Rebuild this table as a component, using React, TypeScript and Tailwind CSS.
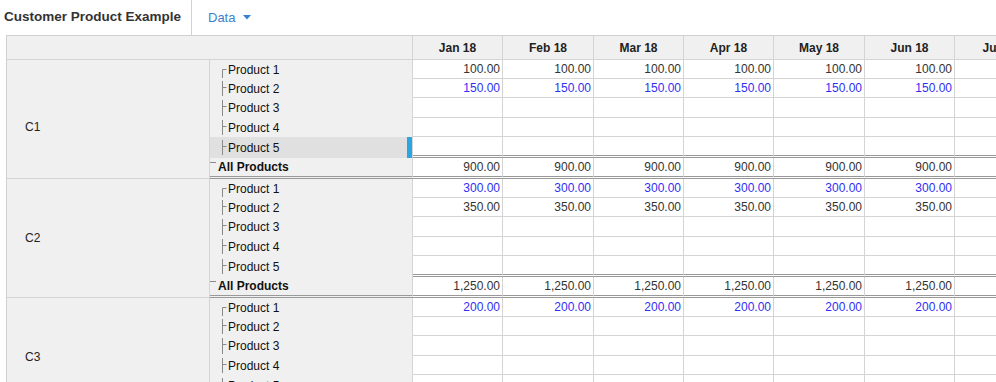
import React from 'react';

type Kind = 'first' | 'mid' | 'total';

type Row = {
  name: string;
  kind: Kind;
  value?: string;
  blue?: boolean;
  selected?: boolean;
};

type Group = { id: string; rows: Row[]; labelPad?: string };

const months = ['Jan 18', 'Feb 18', 'Mar 18', 'Apr 18', 'May 18', 'Jun 18', 'Jul 18'];
const colW = ['w-[90px]', 'w-[91px]', 'w-[90px]', 'w-[90px]', 'w-[91px]', 'w-[90px]', 'w-[90px]'];
const rowH = ['h-[19px]', 'h-[19px]', 'h-[20px]', 'h-[19px]', 'h-[21px]', 'h-[21px]'];
const rowPx = [19, 19, 20, 19, 19, 18];

const groups: Group[] = [
  {
    id: 'C1',
    labelPad: 'pt-[15px]',
    rows: [
      { name: 'Product 1', kind: 'first', value: '100.00' },
      { name: 'Product 2', kind: 'mid', value: '150.00', blue: true },
      { name: 'Product 3', kind: 'mid' },
      { name: 'Product 4', kind: 'mid' },
      { name: 'Product 5', kind: 'mid', selected: true },
      { name: 'All Products', kind: 'total', value: '900.00' },
    ],
  },
  {
    id: 'C2',
    rows: [
      { name: 'Product 1', kind: 'first', value: '300.00', blue: true },
      { name: 'Product 2', kind: 'mid', value: '350.00' },
      { name: 'Product 3', kind: 'mid' },
      { name: 'Product 4', kind: 'mid' },
      { name: 'Product 5', kind: 'mid' },
      { name: 'All Products', kind: 'total', value: '1,250.00' },
    ],
  },
  {
    id: 'C3',
    rows: [
      { name: 'Product 1', kind: 'first', value: '200.00', blue: true },
      { name: 'Product 2', kind: 'mid' },
      { name: 'Product 3', kind: 'mid' },
      { name: 'Product 4', kind: 'mid' },
      { name: 'Product 5', kind: 'mid' },
      { name: 'All Products', kind: 'total', value: '600.00' },
    ],
  },
];

function Tree({ kind, h }: { kind: Kind; h: number }) {
  if (kind === 'total') {
    return (
      <svg width="8" height={h} className="shrink-0" aria-hidden>
        <path d="M0 4.5 H6" stroke="#8a8a8a" fill="none" />
      </svg>
    );
  }
  const d =
    kind === 'first'
      ? `M1.5 ${h - 1} V9.5 H5.5`
      : `M1.5 2 V${h - 2} M1.5 ${Math.round(h / 2) - 1.5} H5.5`;
  return (
    <svg width="7" height={h} className="shrink-0" aria-hidden>
      <path d={d} stroke="#8a8a8a" fill="none" />
    </svg>
  );
}

function GroupBlock({ group }: { group: Group }) {
  return (
    <div className="flex">
      <div
        className={`flex w-[203px] shrink-0 items-center border-r border-b border-[#d4d4d4] bg-[#f0f0f0] pl-[18px] text-[#222] ${
          group.labelPad ?? ''
        }`}
      >
        {group.id}
      </div>
      <div className="flex flex-col">
        {group.rows.map((row, i) => {
          const dbl = i >= 4;
          const isTotal = row.kind === 'total';
          return (
            <div key={row.name} className={`flex ${rowH[i]}`}>
              <div
                className={`flex w-[203px] shrink-0 items-center border-r border-[#d4d4d4] ${
                  isTotal ? 'border-b-[3px] border-double border-b-[#999] pl-0 font-bold' : 'pl-[11px]'
                } ${row.selected ? 'bg-[#e0e0e0]' : 'bg-[#f0f0f0]'} text-[#111]`}
              >
                <Tree kind={row.kind} h={rowPx[i]} />
                <span>{row.name}</span>
                {row.selected && <div className="ml-auto h-full w-[5px] bg-[#2ba6e1]" />}
              </div>
              {months.map((m, j) => (
                <div
                  key={m}
                  className={`flex shrink-0 items-center justify-end ${colW[j]} border-r border-[#d4d4d4] bg-white pr-[2px] ${
                    dbl ? 'border-b-[3px] border-double border-b-[#999]' : 'border-b'
                  } ${row.blue ? 'text-[#2f2ff2]' : 'text-[#333]'}`}
                >
                  {j < 6 ? row.value ?? '' : ''}
                </div>
              ))}
            </div>
          );
        })}
      </div>
    </div>
  );
}

export default function App() {
  return (
    <div className="h-[382px] w-[996px] overflow-hidden bg-white font-['Liberation_Sans',Arial,sans-serif] text-[12px]">
      <div className="flex h-[35px] items-stretch">
        <div className="flex w-[192px] items-center border-r border-[#d0d0d0] pl-[4px] text-[13.5px] font-bold text-[#333]">
          Customer Product Example
        </div>
        <button className="flex items-center gap-[8px] pl-[16px] text-[13px] text-[#3d7fcf]">
          Data
          <svg width="8" height="5" viewBox="0 0 8 5" aria-hidden>
            <path d="M0 0 H8 L4 4.5 Z" fill="#3d7fcf" />
          </svg>
        </button>
      </div>
      <div className="ml-[6px] flex w-max flex-col border-t border-l border-[#d0d0d0]">
        <div className="flex h-[24px] border-b border-[#d4d4d4] bg-[#f0f0f0]">
          <div className="w-[406px] shrink-0 border-r border-[#d4d4d4]" />
          {months.map((m, j) => (
            <div
              key={m}
              className={`flex shrink-0 items-center justify-center ${colW[j]} border-r border-[#d4d4d4] font-bold text-[#222]`}
            >
              {m}
            </div>
          ))}
        </div>
        {groups.map((g) => (
          <GroupBlock key={g.id} group={g} />
        ))}
      </div>
    </div>
  );
}
